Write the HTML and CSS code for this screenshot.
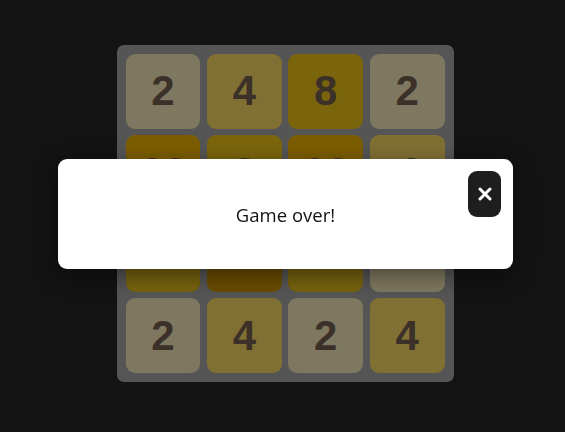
FILE: index.html
```html
<!DOCTYPE html>
<html lang="en">
<head>
<meta charset="utf-8">
<title>2048</title>
<link rel="stylesheet" href="styles.css">
</head>
<body>
<main class="page">
  <div class="board">
    <div class="tile t2">2</div>
    <div class="tile t4">4</div>
    <div class="tile t8">8</div>
    <div class="tile t2">2</div>
    <div class="tile t16">16</div>
    <div class="tile t8">8</div>
    <div class="tile t16">16</div>
    <div class="tile t4">4</div>
    <div class="tile t8b">8</div>
    <div class="tile t32">32</div>
    <div class="tile t8b">8</div>
    <div class="tile t2">2</div>
    <div class="tile t2">2</div>
    <div class="tile t4">4</div>
    <div class="tile t2">2</div>
    <div class="tile t4">4</div>
  </div>
</main>
<div class="overlay">
  <div class="modal" role="dialog">
    <p class="message">Game over!</p>
    <button class="close" aria-label="Close">
      <svg width="14" height="14" viewBox="0 0 14 14"><path d="M2 2 L12 12 M12 2 L2 12" stroke="#fff" stroke-width="3" stroke-linecap="round"/></svg>
    </button>
  </div>
</div>
</body>
</html>
```
FILE: styles.css
```css
html, body {
  margin: 0;
  height: 100%;
  background: #131313;
}
.page {
  padding: 45px 0 0 5px;
  display: flex;
  justify-content: center;
}
.board {
  width: 337px;
  height: 337px;
  box-sizing: border-box;
  padding: 9px;
  background: #555555;
  border-radius: 7px;
  display: grid;
  grid-template-columns: repeat(4, 1fr);
  grid-template-rows: repeat(4, 1fr);
  gap: 6.5px;
}
.tile {
  border-radius: 9px;
  display: flex;
  align-items: center;
  justify-content: center;
  font-family: "Liberation Sans", Arial, sans-serif;
  font-weight: bold;
  font-size: 42px;
  color: #3c3129;
}
.t2 { background: #7f7860; }
.t4 { background: #817034; }
.t8 { background: #7b650c; }
.t8b { background: #76620f; }
.t16 { background: #7b5d00; }
.t32 { background: #6a4c00; }
.overlay {
  position: fixed;
  inset: 0;
  display: flex;
  align-items: center;
  justify-content: center;
  padding: 0 0 4px 6px;
}
.modal {
  position: relative;
  width: 455px;
  height: 110px;
  box-sizing: border-box;
  background: #fff;
  border-radius: 9px;
  box-shadow: 0 6px 22px rgba(0, 0, 0, 0.45);
  display: flex;
  align-items: center;
  justify-content: center;
}
.message {
  margin: 0;
  font-family: "Open Sans", sans-serif;
  font-size: 18.5px;
  color: #111;
}
.close {
  position: absolute;
  top: 12px;
  right: 12px;
  width: 33px;
  height: 46px;
  border: none;
  border-radius: 9px;
  background: #1e1e1e;
  padding: 0;
  display: flex;
  align-items: center;
  justify-content: center;
}
.close svg { display: block; }
```
